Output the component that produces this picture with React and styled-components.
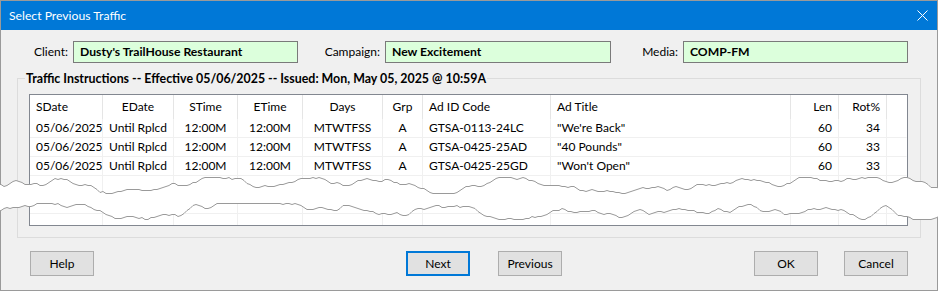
import React from "react";
import styled, { createGlobalStyle } from "styled-components";

const GlobalStyle = createGlobalStyle`
  html, body { margin: 0; padding: 0; background: #ffffff; }
  body { font-family: "Segoe UI", Lato, "Liberation Sans", sans-serif; font-size: 12px; color: #000; }
  * { box-sizing: border-box; }
`;

const Page = styled.div`
  position: relative;
  width: 938px;
  height: 291px;
`;

const Window = styled.div`
  width: 938px;
  height: 291px;
  border: 1px solid #9a9a9a;
  background: #f0f0f0;
  display: flex;
  flex-direction: column;
`;

const TitleBar = styled.div`
  height: 29px;
  background: #0078d7;
  color: #ffffff;
  display: flex;
  align-items: center;
  justify-content: space-between;
  padding: 0 9px 0 8px;
  font-size: 12.2px;
  flex: none;
`;

const FieldRow = styled.div`
  display: flex;
  margin-top: 11px;
  height: 22px;
`;

const Field = styled.div`
  display: flex;
  gap: 5px;
`;

const Label = styled.div`
  width: ${(p) => p.$w}px;
  text-align: right;
  line-height: 22px;
`;

const ValueBox = styled.div`
  width: ${(p) => p.$w}px;
  height: 22px;
  border: 1px solid #7a7a7a;
  background: #dcffdc;
  font-weight: bold;
  font-size: 12.2px;
  line-height: 20px;
  padding-left: 6px;
`;

const Group = styled.fieldset`
  margin: 7px 16px 0 16px;
  border: 1px solid #dcdcdc;
  padding: 7px 12px 11px 11px;
  min-width: 0;
`;

const Legend = styled.legend`
  font-weight: bold;
  font-size: 12.4px;
  padding: 0 1px;
  margin-left: -4px;
  line-height: 17px;
`;

const List = styled.div`
  height: 132px;
  border: 1px solid #828790;
  background: #ffffff;
  overflow: hidden;
  display: grid;
  grid-template-columns: 73px 71px 64px 65px 80px 40px 128px 240px 48px 48px 1fr;
  grid-template-rows: 24px;
  grid-auto-rows: 19px;
  align-content: start;
`;

const HeadCell = styled.div`
  height: 24px;
  line-height: 24px;
  padding: 0 6px;
  border-right: 1px solid ${(p) => (p.$last ? "transparent" : "#e5e5e5")};
  text-align: ${(p) => p.$align};
  white-space: nowrap;
`;

const Cell = styled.div`
  height: 19px;
  line-height: 18px;
  padding: 0 6px;
  border-right: 1px solid ${(p) => (p.$last ? "transparent" : "#f0f0f0")};
  border-bottom: 1px solid #f0f0f0;
  text-align: ${(p) => p.$align};
  white-space: nowrap;
`;

const ButtonRow = styled.div`
  display: flex;
  margin-top: 13px;
  padding-left: 29px;
`;

const Button = styled.div`
  width: 64px;
  height: 25px;
  margin-left: ${(p) => p.$ml || 0}px;
  background: #e1e1e1;
  border: ${(p) => (p.$default ? "2px solid #0078d7" : "1px solid #adadad")};
  display: flex;
  align-items: center;
  justify-content: center;
  font-size: 12px;
`;

const Tear = styled.svg`
  position: absolute;
  left: 0;
  top: 0;
  pointer-events: none;
`;

const columns = [
  { name: "SDate", align: "left" },
  { name: "EDate", align: "center" },
  { name: "STime", align: "center" },
  { name: "ETime", align: "center" },
  { name: "Days", align: "center" },
  { name: "Grp", align: "center" },
  { name: "Ad ID Code", align: "left" },
  { name: "Ad Title", align: "left" },
  { name: "Len", align: "right" },
  { name: "Rot%", align: "right" },
  { name: "", align: "left" },
];

const rows = [
  ["05/06/2025", "Until Rplcd", "12:00M", "12:00M", "MTWTFSS", "A", "GTSA-0113-24LC", "\"We're Back\"", "60", "34", ""],
  ["05/06/2025", "Until Rplcd", "12:00M", "12:00M", "MTWTFSS", "A", "GTSA-0425-25AD", "\"40 Pounds\"", "60", "33", ""],
  ["05/06/2025", "Until Rplcd", "12:00M", "12:00M", "MTWTFSS", "A", "GTSA-0425-25GD", "\"Won't Open\"", "60", "33", ""],
  ["", "", "", "", "", "", "", "", "", "", ""],
  ["", "", "", "", "", "", "", "", "", "", ""],
  ["", "", "", "", "", "", "", "", "", "", ""],
];

const rng = (seed) => {
  let s = seed;
  return () => {
    s = (s * 16807) % 2147483647;
    return (s - 1) / 2147483646;
  };
};

const edge = (seed, base, amp) => {
  const r = rng(seed);
  const pts = [];
  let y = base;
  let v = 0;
  for (let x = -2; x <= 942; x += 3) {
    v = v * 0.55 + (r() - 0.5) * 3.4;
    y += v + (base - y) * 0.05;
    if (y > base + amp) y = base + amp;
    if (y < base - amp) y = base - amp;
    pts.push([x, Math.round(y) + 0.5]);
  }
  return pts;
};

const upper = edge(12345, 185, 8);
const lower = edge(67890, 211, 8);
const toStr = (pts) => pts.map((p) => p.join(",")).join(" ");
const polygon = toStr(upper) + " " + toStr([...lower].reverse());

export default function App() {
  return (
    <Page>
      <GlobalStyle />
      <Window>
        <TitleBar>
          <span>Select Previous Traffic</span>
          <svg width="11" height="11" viewBox="0 0 11 11">
            <path d="M0.5 0.5 L10.5 10.5 M10.5 0.5 L0.5 10.5" stroke="#ffffff" strokeWidth="1" />
          </svg>
        </TitleBar>
        <FieldRow>
          <Field>
            <Label $w={67}>Client:</Label>
            <ValueBox $w={225}>Dusty's TrailHouse Restaurant</ValueBox>
          </Field>
          <Field>
            <Label $w={82}>Campaign:</Label>
            <ValueBox $w={226}>New Excitement</ValueBox>
          </Field>
          <Field>
            <Label $w={67}>Media:</Label>
            <ValueBox $w={225}>COMP-FM</ValueBox>
          </Field>
        </FieldRow>
        <Group>
          <Legend>Traffic Instructions -- Effective 05/06/2025 -- Issued: Mon, May 05, 2025 @ 10:59A</Legend>
          <List>
            {columns.map((c, i) => (
              <HeadCell key={"h" + i} $align={c.align} $last={i === columns.length - 1}>
                {c.name}
              </HeadCell>
            ))}
            {rows.map((r, ri) =>
              r.map((v, ci) => (
                <Cell key={ri + "-" + ci} $align={columns[ci].align} $last={ci === columns.length - 1}>
                  {v}
                </Cell>
              ))
            )}
          </List>
        </Group>
        <ButtonRow>
          <Button>Help</Button>
          <Button $ml={312} $default>Next</Button>
          <Button $ml={28}>Previous</Button>
          <Button $ml={192}>OK</Button>
          <Button $ml={26}>Cancel</Button>
        </ButtonRow>
      </Window>
      <Tear width="938" height="291" viewBox="0 0 938 291">
        <polygon points={polygon} fill="#ffffff" />
        <polyline points={toStr(upper)} fill="none" stroke="#9a9a9a" strokeWidth="1" />
        <polyline points={toStr(lower)} fill="none" stroke="#9a9a9a" strokeWidth="1" />
      </Tear>
    </Page>
  );
}
